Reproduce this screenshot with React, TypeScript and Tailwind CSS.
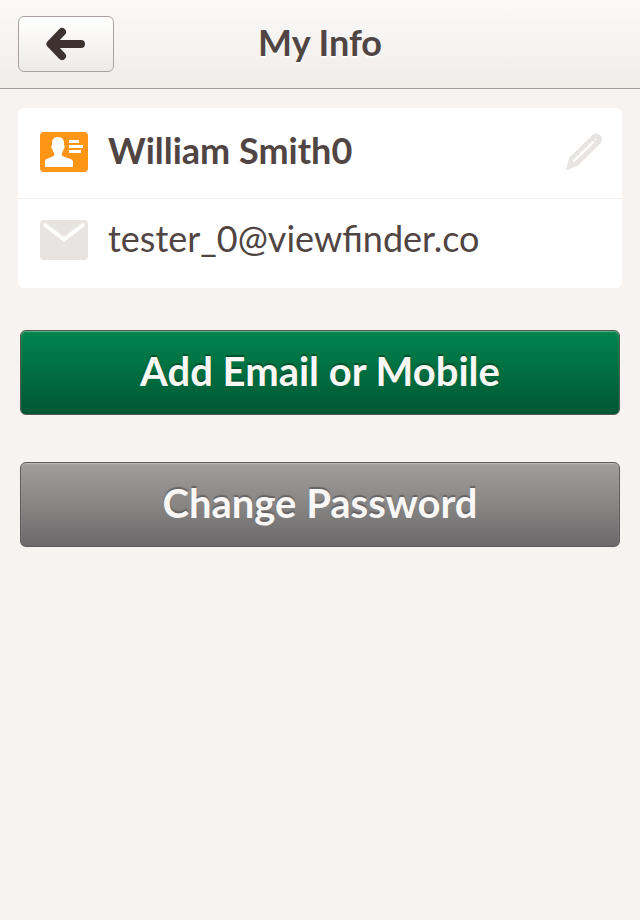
import type { ReactNode } from "react";

function BackArrowIcon() {
  return (
    <svg width="40" height="34" viewBox="0 0 40 34" fill="none" stroke="#3d3230" strokeWidth="8" strokeLinecap="round" aria-hidden="true">
      <path d="M16 5 4.500 17 16 29" strokeLinejoin="round" />
      <path d="M7 17h28" />
    </svg>
  );
}

function ContactCardIcon() {
  return (
    <svg className="shrink-0" width="48" height="40" viewBox="0 0 48 40" aria-hidden="true">
      <rect width="48" height="40" rx="4" fill="#ff9514" />
      <path
        d="M5 35V29.500C5 28 5.800 27.200 7 26.700L12 24.800C13.500 24.100 14.200 23.500 14.200 22.500V21C13.200 20 12.700 18.800 12.500 17.300C11.700 16.700 11.300 15.500 11.300 14.300C11.300 13.600 11.600 13.200 12.100 13C11.600 8.500 13.200 5 18 5S24.500 8.500 24 13C24.500 13.200 24.700 13.600 24.700 14.300C24.700 15.500 24.300 16.700 23.500 17.300C23.300 18.800 22.800 20 21.900 21V22.500C21.900 23.500 22.600 24.100 24 24.800L30.500 26.900C32.200 27.600 33 28.400 33 29.700V35Z"
        fill="#fff"
      />
      <path d="M29 8h10v3H29zM29 13h14v3H29zM29 18h12v3H29z" fill="#fff" />
    </svg>
  );
}

function EnvelopeIcon() {
  return (
    <svg className="shrink-0" width="48" height="40" viewBox="0 0 48 40" fill="none" aria-hidden="true">
      <rect width="48" height="40" rx="4" fill="#e7e4e2" />
      <path d="M5 5l19 14.500L43 5" stroke="#fff" strokeWidth="4" strokeLinecap="round" />
    </svg>
  );
}

function PencilIcon() {
  return (
    <svg width="38" height="38" viewBox="0 0 38 38" aria-hidden="true">
      <path d="M0 36.500 3.500 24.500 26 2.500C28.500 .2 32 .2 34.300 2.500S36.500 8.200 34.200 10.500L12 32.500 2 36.800C.8 37.200 0 37.200 0 36.500Z" fill="#e7e4e2" />
      <path d="M7 29.500V27L26.800 7.700l1.700 1.700L9 28.500z" fill="#fff" />
      <circle cx="29.500" cy="6.500" r="1" fill="#fff" />
    </svg>
  );
}

function ActionButton({ tone, children }: { tone: string; children: ReactNode }) {
  return (
    <button
      type="button"
      className={`h-[85px] w-full rounded-md border bg-linear-to-b pb-1 text-[40px] font-bold leading-none text-[#faf8f6] ${tone}`}
    >
      {children}
    </button>
  );
}

export default function App() {
  return (
    <div className="min-h-screen bg-[#f7f3f0] font-['Lato','Open_Sans',sans-serif] text-[#504543]">
      <header className="grid h-[89px] grid-cols-[96px_1fr_96px] items-center border-b border-[#a39c99] bg-linear-to-b from-[#fbfaf9] to-[#f0ece8] px-[18px]">
        <button
          type="button"
          aria-label="Back"
          className="flex h-14 items-center justify-center rounded-md border border-[#aaa19e] bg-linear-to-b from-white to-[#eeebe7]"
        >
          <BackArrowIcon />
        </button>
        <h1 className="pb-1 text-center text-[36px] font-bold leading-none [text-shadow:0_2px_0_#fff]">My Info</h1>
      </header>

      <main>
        <section className="mx-[18px] mt-[19px] rounded-md bg-white">
          <div className="flex h-[91px] items-center gap-5 border-b border-[#f4f2f1] px-[22px] pb-0.5">
            <ContactCardIcon />
            <span className="flex-1 pb-1 text-[36px] font-bold leading-none">William Smith0</span>
            <button type="button" aria-label="Edit name" className="-mr-1">
              <PencilIcon />
            </button>
          </div>
          <div className="flex h-[89px] items-center gap-5 px-[22px] pb-2">
            <EnvelopeIcon />
            <span className="pb-1 text-[36px] leading-none">tester_0@viewfinder.co</span>
          </div>
        </section>

        <div className="mx-5 mt-[42px] flex flex-col gap-[47px]">
          <ActionButton tone="border-[#555653] from-[#00854d] to-[#005733] shadow-[inset_0_1px_1px_#5fae89] [text-shadow:0_-2px_1px_#00522f]">
            Add Email or Mobile
          </ActionButton>
          <ActionButton tone="border-[#5c5a5a] from-[#a09f9c] via-[#888585] to-[#6c696a] shadow-[inset_0_1px_1px_#bdbcba] [text-shadow:0_-2px_1px_#656263]">
            Change Password
          </ActionButton>
        </div>
      </main>
    </div>
  );
}
